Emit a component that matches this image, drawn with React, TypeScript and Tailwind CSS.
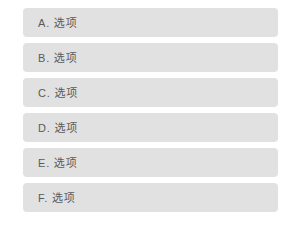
import React from 'react';

const options = ['A. 选项', 'B. 选项', 'C. 选项', 'D. 选项', 'E. 选项', 'F. 选项'];

export default function App() {
  return (
    <div
      className="w-[300px] h-[225px] bg-white pt-[8px] pr-[22px] pl-[23px]"
      style={{ fontFamily: '"Liberation Sans", "Noto Sans CJK SC", sans-serif' }}
    >
      <div className="flex flex-col gap-[6px]">
        {options.map((opt) => (
          <div
            key={opt}
            className="h-[29px] flex items-center pl-[15px] pt-[1px] rounded-[4px] bg-[#e1e1e1] text-[11px] tracking-[0.8px] text-[#5a5a5a]"
          >
            {opt}
          </div>
        ))}
      </div>
    </div>
  );
}
